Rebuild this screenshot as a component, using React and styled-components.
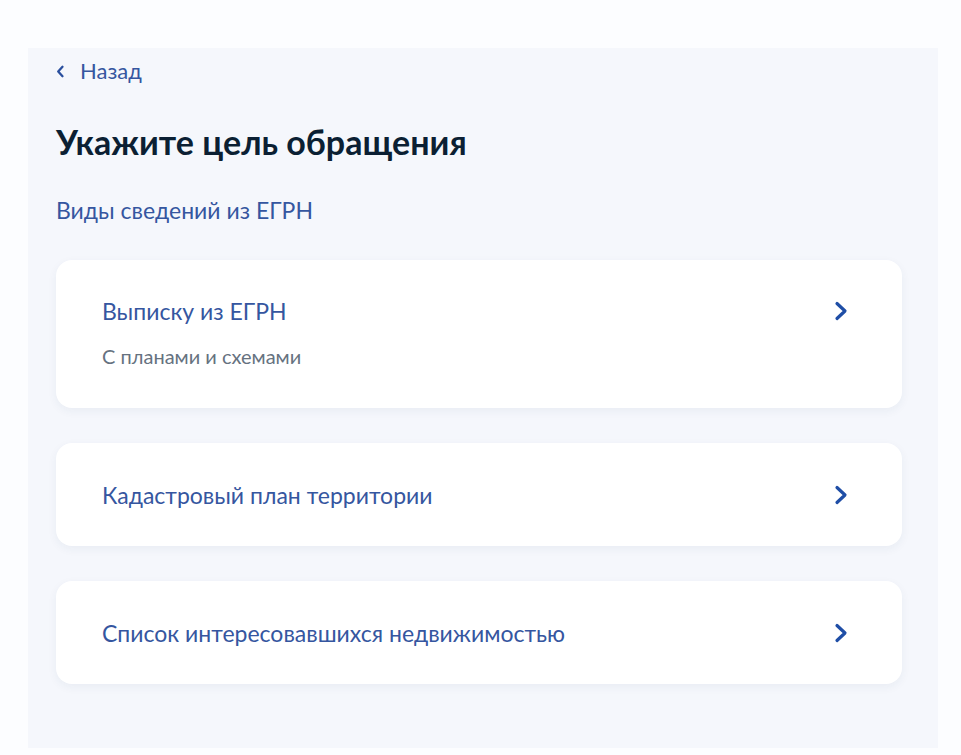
import styled, { createGlobalStyle } from "styled-components";

const GlobalStyle = createGlobalStyle`
  html, body {
    margin: 0;
    padding: 0;
    background: #fcfdff;
    font-family: Lato, "Noto Sans", sans-serif;
  }
`;

const Page = styled.div`
  padding: 48px 23px 7px 28px;
`;

const Panel = styled.div`
  width: 910px;
  height: 700px;
  box-sizing: border-box;
  background: #f5f7fc;
  padding: 11px 36px 0 28px;
  display: flex;
  flex-direction: column;
`;

const Back = styled.a`
  display: flex;
  align-items: center;
  gap: 15px;
  height: 24px;
  line-height: 24px;
  color: #3556a0;
  font-size: 22px;
  text-decoration: none;
  cursor: pointer;
`;

const Title = styled.h1`
  margin: 39px 0 0;
  font-size: 34px;
  line-height: 40px;
  font-weight: 700;
  color: #0b1f33;
`;

const Subtitle = styled.div`
  margin-top: 34px;
  font-size: 23px;
  line-height: 28px;
  color: #3556a0;
`;

const List = styled.div`
  margin-top: 36px;
  display: flex;
  flex-direction: column;
  gap: 35px;
`;

const Card = styled.div`
  background: #fff;
  border-radius: 16px;
  box-shadow: 0 3px 10px rgba(40, 60, 110, 0.06);
  min-height: ${(p) => (p.$tall ? "148px" : "103px")};
  box-sizing: border-box;
  padding: ${(p) => (p.$tall ? "37px" : "0")} 54px 0 46px;
  display: flex;
  align-items: ${(p) => (p.$tall ? "flex-start" : "center")};
  justify-content: space-between;
  cursor: pointer;
`;

const CardText = styled.div`
  display: flex;
  flex-direction: column;
  gap: 19px;
`;

const CardTitle = styled.div`
  font-size: 23px;
  line-height: 28px;
  color: #3556a0;
`;

const CardNote = styled.div`
  font-size: 20px;
  line-height: 24px;
  color: #66727f;
`;

const Arrow = styled.svg`
  flex-shrink: 0;
  margin-top: ${(p) => (p.$tall ? "4px" : "0")};
`;

const ChevronRight = ({ tall }) => (
  <Arrow $tall={tall} width="14" height="20" viewBox="0 0 14 20">
    <path
      d="M3 2.5 L11 10 L3 17.5"
      fill="none"
      stroke="#1f4ea6"
      strokeWidth="3.2"
      strokeLinecap="round"
      strokeLinejoin="round"
    />
  </Arrow>
);

const items = [
  { title: "Выписку из ЕГРН", note: "С планами и схемами" },
  { title: "Кадастровый план территории" },
  { title: "Список интересовавшихся недвижимостью" },
];

export default function App() {
  return (
    <>
      <GlobalStyle />
      <Page>
        <Panel>
          <Back>
            <svg width="9" height="13" viewBox="0 0 9 13">
              <path
                d="M6.5 1.8 L2.2 6.5 L6.5 11.2"
                fill="none"
                stroke="#2a4f9e"
                strokeWidth="2.3"
                strokeLinecap="round"
                strokeLinejoin="round"
              />
            </svg>
            Назад
          </Back>
          <Title>Укажите цель обращения</Title>
          <Subtitle>Виды сведений из ЕГРН</Subtitle>
          <List>
            {items.map((it) => (
              <Card key={it.title} $tall={!!it.note}>
                <CardText>
                  <CardTitle>{it.title}</CardTitle>
                  {it.note && <CardNote>{it.note}</CardNote>}
                </CardText>
                <ChevronRight tall={!!it.note} />
              </Card>
            ))}
          </List>
        </Panel>
      </Page>
    </>
  );
}
